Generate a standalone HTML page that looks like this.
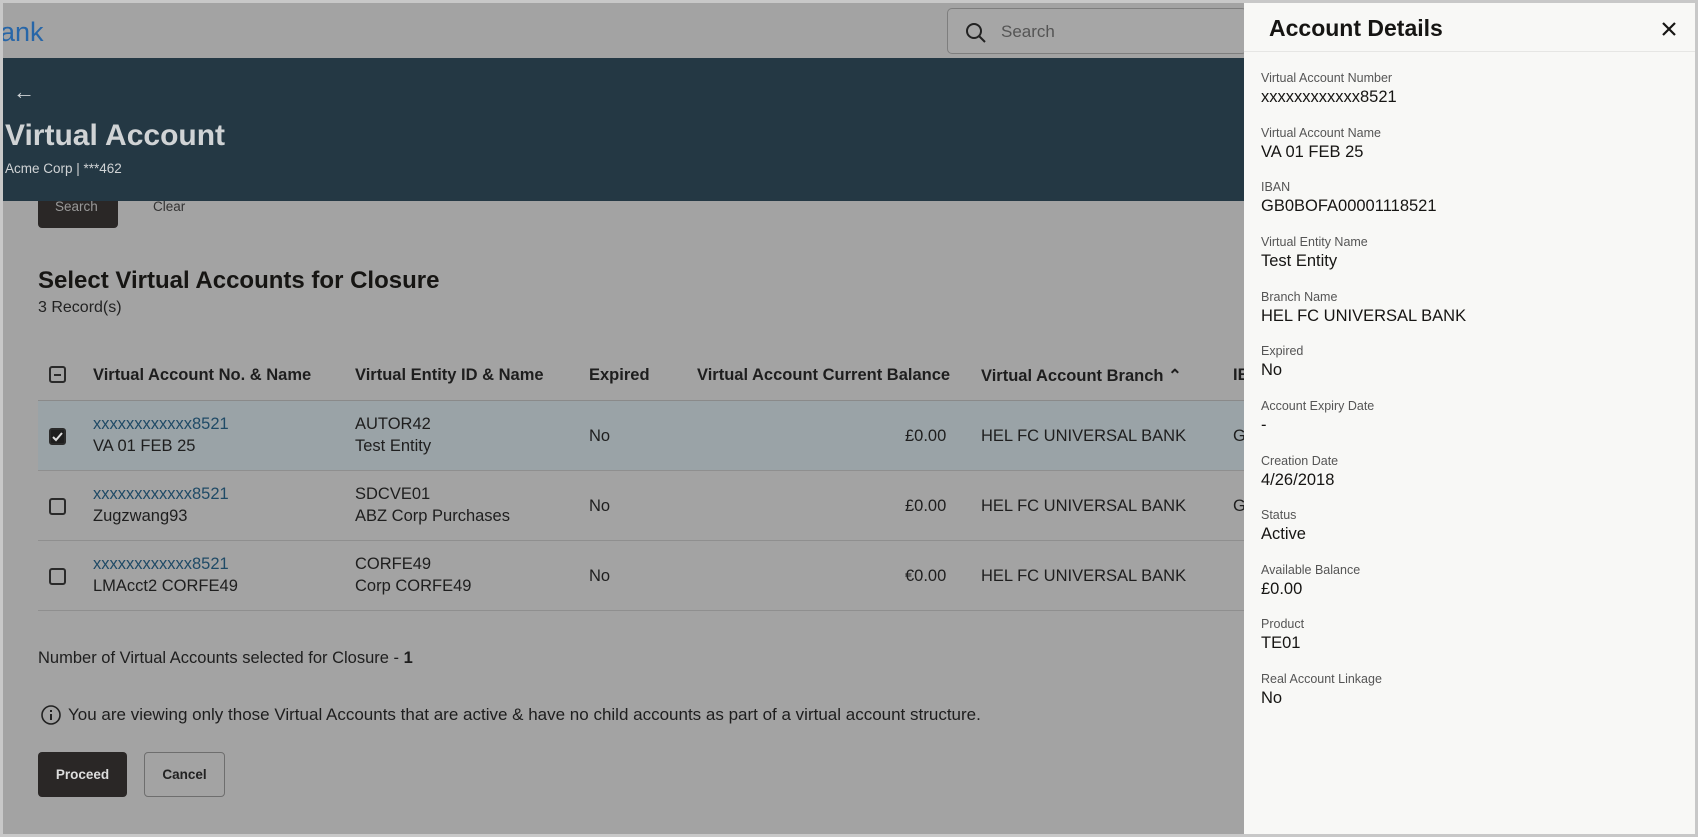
<!DOCTYPE html>
<html><head><meta charset="utf-8"><style>
*{margin:0;padding:0;box-sizing:border-box}
body{width:1698px;height:837px;overflow:hidden;background:#c8c8c8;font-family:"Liberation Sans",sans-serif;color:#161513;position:relative}
.main{position:absolute;left:3px;top:3px;width:1692px;height:831px;background:#a3a3a3;overflow:hidden}
.a{position:absolute;white-space:nowrap}
.banner{position:absolute;left:0;top:55px;width:1250px;height:143px;background:#243844}
.hd{font-size:16.5px;font-weight:bold;color:#1e1e1e}
.td{font-size:16.5px;color:#1e1e1e;line-height:22px}
.lk{color:#1f4a66}
.row{position:absolute;left:35px;width:1215px;border-bottom:1px solid #8f8f8f}
.cb{position:absolute;width:17px;height:17px;border:2px solid #2a2a2a;border-radius:3px}
.panel{position:absolute;left:1244px;top:3px;width:451px;height:831px;background:#f8f8f6}
.lb{position:absolute;left:17px;font-size:12.5px;color:#555}
.vl{position:absolute;left:17px;font-size:16.5px;color:#161513}
</style></head><body>
<div class="main">
<div class="a" style="left:-3px;top:14px;font-size:27px;color:#2766a8">ank</div>
<div class="a" style="left:944px;top:5px;width:300px;height:46px;border:1px solid #7e7e7e;border-radius:5px;background:#a6a6a6"></div>
<svg class="a" style="left:962px;top:19px" width="22" height="22" viewBox="0 0 22 22"><circle cx="9" cy="9" r="7" fill="none" stroke="#222" stroke-width="2"/><path d="M14 14l6 6" stroke="#222" stroke-width="2"/></svg>
<div class="a" style="left:998px;top:19px;font-size:17px;color:#555">Search</div>
<div class="a" style="left:35px;top:190px;width:80px;height:35px;background:#2a2726;border-radius:4px"></div>
<div class="a" style="left:52px;top:196px;font-size:13.5px;color:#999">Search</div>
<div class="a" style="left:150px;top:196px;font-size:13.5px;color:#333">Clear</div>
<div class="banner"></div>
<div class="a" style="left:10px;top:76px;font-size:22px;color:#cfd3d6">←</div>
<div class="a" style="left:2px;top:116px;font-size:30px;font-weight:bold;color:#d0d3d5">Virtual Account</div>
<div class="a" style="left:2px;top:158px;font-size:13.5px;color:#d0d3d5">Acme Corp | ***462</div>
<div class="a" style="left:35px;top:264px;font-size:24px;font-weight:bold;color:#161513">Select Virtual Accounts for Closure</div>
<div class="a" style="left:35px;top:296px;font-size:16px;color:#222">3 Record(s)</div>
<div class="cb" style="left:46px;top:363px"><div style="position:absolute;left:3px;top:6px;width:7px;height:2px;background:#2a2a2a"></div></div>
<div class="a hd" style="left:90px;top:363px">Virtual Account No. &amp; Name</div>
<div class="a hd" style="left:352px;top:363px">Virtual Entity ID &amp; Name</div>
<div class="a hd" style="left:586px;top:363px">Expired</div>
<div class="a hd" style="left:694px;top:363px">Virtual Account Current Balance</div>
<div class="a hd" style="left:978px;top:363px">Virtual Account Branch ⌃</div>
<div class="a hd" style="left:1230px;top:363px">IB</div>
<div class="row" style="top:397px;height:1px;border-bottom:1px solid #8a8a8a"></div>
<div class="row" style="top:398px;height:70px;background:#9aa3a7"></div>
<div class="row" style="top:468px;height:70px"></div>
<div class="row" style="top:538px;height:70px"></div>
<div class="cb" style="left:46px;top:425px;background:#1e1e1e"><svg width="13" height="13" style="position:absolute;left:0;top:0"><path d="M2 7l3 3 6-7" stroke="#ddd" stroke-width="2" fill="none"/></svg></div>
<div class="cb" style="left:46px;top:495px"></div>
<div class="cb" style="left:46px;top:565px"></div>
<div class="a td" style="left:90px;top:410px"><span class="lk">xxxxxxxxxxxx8521</span><br>VA 01 FEB 25</div>
<div class="a td" style="left:352px;top:410px">AUTOR42<br>Test Entity</div>
<div class="a td" style="left:586px;top:422px">No</div>
<div class="a td" style="left:902px;top:422px">£0.00</div>
<div class="a td" style="left:978px;top:422px">HEL FC UNIVERSAL BANK</div>
<div class="a td" style="left:1230px;top:422px">G</div>
<div class="a td" style="left:90px;top:480px"><span class="lk">xxxxxxxxxxxx8521</span><br>Zugzwang93</div>
<div class="a td" style="left:352px;top:480px">SDCVE01<br>ABZ Corp Purchases</div>
<div class="a td" style="left:586px;top:492px">No</div>
<div class="a td" style="left:902px;top:492px">£0.00</div>
<div class="a td" style="left:978px;top:492px">HEL FC UNIVERSAL BANK</div>
<div class="a td" style="left:1230px;top:492px">G</div>
<div class="a td" style="left:90px;top:550px"><span class="lk">xxxxxxxxxxxx8521</span><br>LMAcct2 CORFE49</div>
<div class="a td" style="left:352px;top:550px">CORFE49<br>Corp CORFE49</div>
<div class="a td" style="left:586px;top:562px">No</div>
<div class="a td" style="left:902px;top:562px">€0.00</div>
<div class="a td" style="left:978px;top:562px">HEL FC UNIVERSAL BANK</div>
<div class="a td" style="left:35px;top:644px">Number of Virtual Accounts selected for Closure - <b>1</b></div>
<svg class="a" style="left:37px;top:701px" width="22" height="22"><circle cx="11" cy="11" r="9" fill="none" stroke="#222" stroke-width="1.6"/><path d="M11 10v6M11 6v2" stroke="#222" stroke-width="2"/></svg>
<div class="a td" style="left:65px;top:701px;font-size:17px">You are viewing only those Virtual Accounts that are active &amp; have no child accounts as part of a virtual account structure.</div>
<div class="a" style="left:35px;top:749px;width:89px;height:45px;background:#2a2726;border-radius:4px;color:#ddd;font-size:13.5px;font-weight:bold;text-align:center;line-height:45px">Proceed</div>
<div class="a" style="left:141px;top:749px;width:81px;height:45px;border:1px solid #6e6e6e;border-radius:4px;color:#222;font-size:13.5px;font-weight:bold;text-align:center;line-height:43px">Cancel</div>
</div>
<div class="panel">
<div class="a" style="left:25px;top:12px;font-size:23px;font-weight:bold">Account Details</div>
<svg class="a" style="left:417px;top:18px" width="16" height="16"><path d="M2 2l12 12M14 2L2 14" stroke="#161513" stroke-width="2.2"/></svg>
<div class="a" style="left:0;top:48px;width:451px;height:1px;background:#e6e6e4"></div>
<div class="lb" style="top:68px">Virtual Account Number</div><div class="vl" style="top:85px">xxxxxxxxxxxx8521</div>
<div class="lb" style="top:123px">Virtual Account Name</div><div class="vl" style="top:140px">VA 01 FEB 25</div>
<div class="lb" style="top:177px">IBAN</div><div class="vl" style="top:194px">GB0BOFA00001118521</div>
<div class="lb" style="top:232px">Virtual Entity Name</div><div class="vl" style="top:249px">Test Entity</div>
<div class="lb" style="top:287px">Branch Name</div><div class="vl" style="top:304px">HEL FC UNIVERSAL BANK</div>
<div class="lb" style="top:341px">Expired</div><div class="vl" style="top:358px">No</div>
<div class="lb" style="top:396px">Account Expiry Date</div><div class="vl" style="top:413px">-</div>
<div class="lb" style="top:451px">Creation Date</div><div class="vl" style="top:468px">4/26/2018</div>
<div class="lb" style="top:505px">Status</div><div class="vl" style="top:522px">Active</div>
<div class="lb" style="top:560px">Available Balance</div><div class="vl" style="top:577px">£0.00</div>
<div class="lb" style="top:614px">Product</div><div class="vl" style="top:631px">TE01</div>
<div class="lb" style="top:669px">Real Account Linkage</div><div class="vl" style="top:686px">No</div>
</div>
</body></html>
